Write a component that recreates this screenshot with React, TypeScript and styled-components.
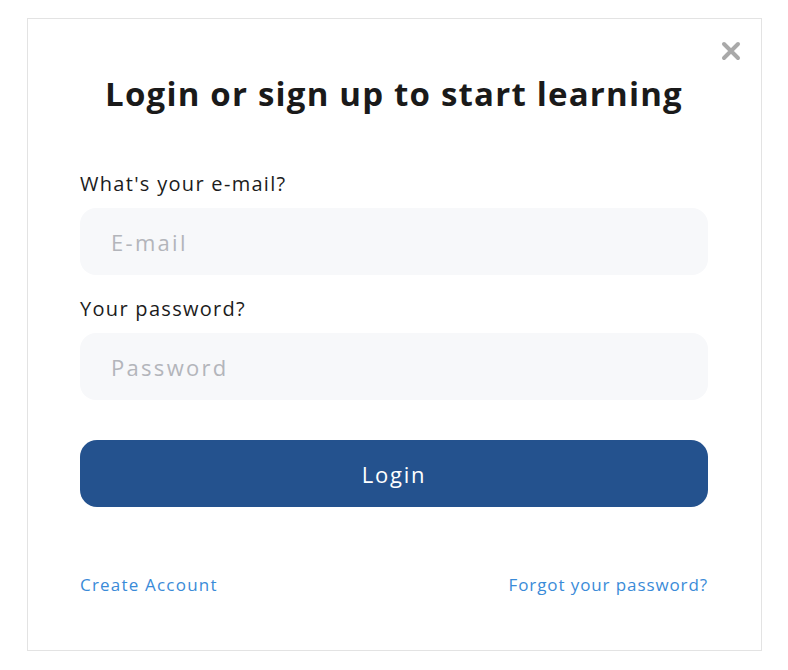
import React, { useState } from "react";
import styled, { createGlobalStyle } from "styled-components";

const GlobalStyle = createGlobalStyle`
  body {
    margin: 0;
    background: #ffffff;
    font-family: "Open Sans", "DejaVu Sans", sans-serif;
  }
`;

const Card = styled.div`
  position: relative;
  box-sizing: border-box;
  width: 735px;
  height: 633px;
  margin: 18px 0 0 27px;
  padding: 51px 53px 0 52px;
  border: 1px solid #e3e3e3;
  background: #ffffff;
  display: flex;
  flex-direction: column;
`;

const CloseBtn = styled.button`
  position: absolute;
  top: 20px;
  right: 18px;
  width: 24px;
  height: 24px;
  padding: 0;
  border: none;
  background: none;
  cursor: pointer;
  display: flex;
  align-items: center;
  justify-content: center;
`;

const Title = styled.h1`
  margin: 0 0 51px;
  font-family: "Open Sans", sans-serif;
  font-weight: 700;
  font-size: 33px;
  line-height: 48px;
  color: #1a1a1a;
  text-align: center;
  letter-spacing: 1.2px;
`;

const Label = styled.label`
  display: block;
  font-size: 20px;
  line-height: 30px;
  color: #1c1c1c;
  letter-spacing: 1.3px;
  margin-bottom: 9px;
`;

const Input = styled.input`
  box-sizing: border-box;
  width: 100%;
  height: 67px;
  border: none;
  outline: none;
  border-radius: 16px;
  background: #f7f8fa;
  padding: 0 31px;
  font-family: "Open Sans", sans-serif;
  font-size: 22px;
  letter-spacing: 2.3px;
  color: #333;
  margin-bottom: ${(p: { $gap: number }) => p.$gap}px;

  &::placeholder {
    color: #b3b5bb;
  }
`;

const SubmitButton = styled.button`
  width: 100%;
  height: 67px;
  border: none;
  border-radius: 17px;
  background: #24528e;
  color: #ffffff;
  font-family: "Open Sans", sans-serif;
  font-size: 22px;
  letter-spacing: 1.8px;
  cursor: pointer;
`;

const Footer = styled.div`
  display: flex;
  justify-content: space-between;
  margin-top: 65px;
`;

const FooterLink = styled.a`
  font-size: 17px;
  line-height: 26px;
  color: #3a8bd8;
  letter-spacing: ${(p: { $spacing: number }) => p.$spacing}px;
  text-decoration: none;
  cursor: pointer;
`;

export default function App() {
  const [email, setEmail] = useState("");
  const [password, setPassword] = useState("");

  return (
    <>
      <GlobalStyle />
      <Card>
        <CloseBtn aria-label="Close">
          <svg width="20" height="20" viewBox="0 0 20 20">
            <path
              d="M3 3 L17 17 M17 3 L3 17"
              stroke="#a9a9a9"
              strokeWidth="4"
              strokeLinecap="round"
            />
          </svg>
        </CloseBtn>
        <Title>Login or sign up to start learning</Title>
        <Label htmlFor="email">What's your e-mail?</Label>
        <Input
          id="email"
          $gap={19}
          placeholder="E-mail"
          value={email}
          onChange={(e) => setEmail(e.target.value)}
        />
        <Label htmlFor="password">Your password?</Label>
        <Input
          id="password"
          type="password"
          $gap={40}
          placeholder="Password"
          value={password}
          onChange={(e) => setPassword(e.target.value)}
        />
        <SubmitButton>Login</SubmitButton>
        <Footer>
          <FooterLink $spacing={1.2}>Create Account</FooterLink>
          <FooterLink $spacing={0.9}>Forgot your password?</FooterLink>
        </Footer>
      </Card>
    </>
  );
}
